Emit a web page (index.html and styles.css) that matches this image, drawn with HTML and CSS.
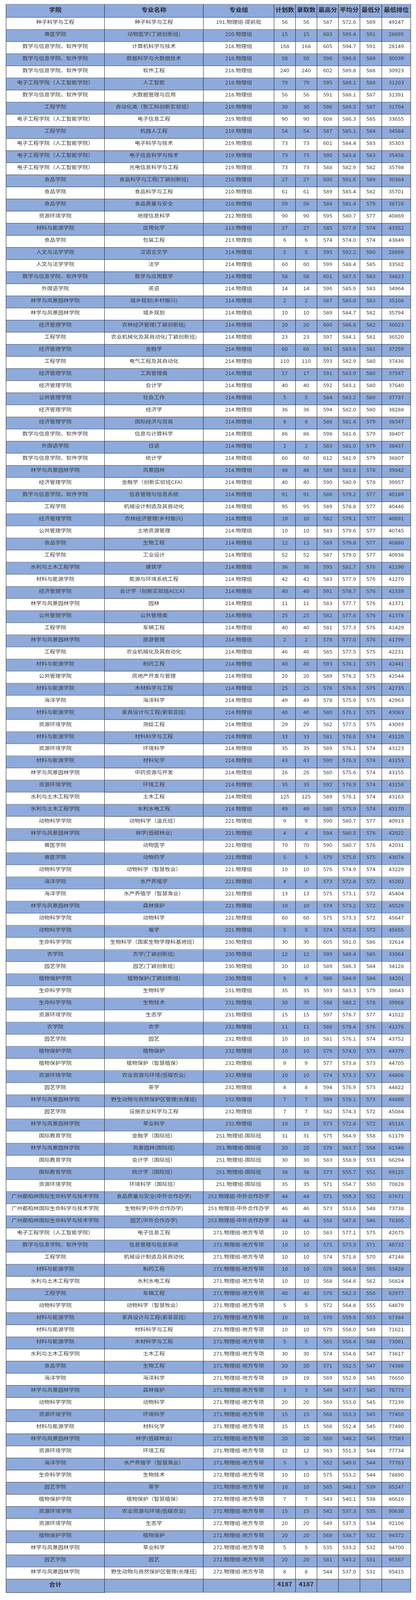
FILE: index.html
```html
<!DOCTYPE html>
<html lang="zh-CN">
<head>
<meta charset="utf-8">
<title>录取分数统计</title>
<link rel="stylesheet" href="styles.css">
</head>
<body>
<div class="page">
<div class="sheet">
<div class="score-table">
<div class="row head"><span>学院</span><span>专业名称</span><span>专业组</span><span>计划数</span><span>录取数</span><span>最高分</span><span>平均分</span><span>最低分</span><span>最低排位</span></div>
<div class="row"><span>种子科学与工程</span><span>种子科学与工程</span><span>191.物理组-提前批</span><span>56</span><span>56</span><span>587</span><span>572.6</span><span>569</span><span>49247</span></div>
<div class="row"><span>兽医学院</span><span>动物医学(丁颖创新班)</span><span>220.物理组</span><span>15</span><span>15</span><span>603</span><span>595.4</span><span>591</span><span>28695</span></div>
<div class="row"><span>数学与信息学院、软件学院</span><span>计算机科学与技术</span><span>218.物理组</span><span>168</span><span>168</span><span>605</span><span>594.7</span><span>591</span><span>28149</span></div>
<div class="row"><span>数学与信息学院、软件学院</span><span>数据科学与大数据技术</span><span>218.物理组</span><span>50</span><span>50</span><span>596</span><span>590.6</span><span>589</span><span>30039</span></div>
<div class="row"><span>数学与信息学院、软件学院</span><span>软件工程</span><span>218.物理组</span><span>240</span><span>240</span><span>602</span><span>589.8</span><span>588</span><span>30923</span></div>
<div class="row"><span>电子工程学院（人工智能学院）</span><span>人工智能</span><span>218.物理组</span><span>79</span><span>79</span><span>595</span><span>589.1</span><span>588</span><span>31203</span></div>
<div class="row"><span>数学与信息学院、软件学院</span><span>大数据管理与应用</span><span>218.物理组</span><span>56</span><span>56</span><span>591</span><span>588.1</span><span>587</span><span>31391</span></div>
<div class="row"><span>工程学院</span><span>自动化类（新工科创新实验班）</span><span>219.物理组</span><span>30</span><span>30</span><span>596</span><span>589.5</span><span>587</span><span>31704</span></div>
<div class="row"><span>电子工程学院（人工智能学院）</span><span>电子信息工程</span><span>219.物理组</span><span>90</span><span>90</span><span>608</span><span>586.3</span><span>585</span><span>33655</span></div>
<div class="row"><span>工程学院</span><span>机器人工程</span><span>219.物理组</span><span>54</span><span>54</span><span>587</span><span>585.1</span><span>584</span><span>34584</span></div>
<div class="row"><span>电子工程学院（人工智能学院）</span><span>电子科学与技术</span><span>219.物理组</span><span>73</span><span>73</span><span>601</span><span>584.4</span><span>583</span><span>35303</span></div>
<div class="row"><span>电子工程学院（人工智能学院）</span><span>电子信息科学与技术</span><span>219.物理组</span><span>73</span><span>73</span><span>590</span><span>583.8</span><span>583</span><span>35458</span></div>
<div class="row"><span>电子工程学院（人工智能学院）</span><span>光电信息科学与工程</span><span>219.物理组</span><span>73</span><span>73</span><span>588</span><span>582.9</span><span>582</span><span>35798</span></div>
<div class="row"><span>食品学院</span><span>食品科学与工程(丁颖创新班)</span><span>210.物理组</span><span>27</span><span>27</span><span>600</span><span>591.6</span><span>589</span><span>30384</span></div>
<div class="row"><span>食品学院</span><span>食品科学与工程</span><span>210.物理组</span><span>61</span><span>61</span><span>589</span><span>585.4</span><span>582</span><span>35701</span></div>
<div class="row"><span>食品学院</span><span>食品质量与安全</span><span>210.物理组</span><span>59</span><span>59</span><span>588</span><span>581.4</span><span>579</span><span>38728</span></div>
<div class="row"><span>资源环境学院</span><span>地理信息科学</span><span>212.物理组</span><span>90</span><span>90</span><span>595</span><span>580.7</span><span>577</span><span>40869</span></div>
<div class="row"><span>材料与能源学院</span><span>应用化学</span><span>213.物理组</span><span>27</span><span>27</span><span>585</span><span>577.9</span><span>574</span><span>43352</span></div>
<div class="row"><span>食品学院</span><span>包装工程</span><span>213.物理组</span><span>6</span><span>6</span><span>574</span><span>574.0</span><span>574</span><span>43849</span></div>
<div class="row"><span>人文与法学学院</span><span>汉语言文学</span><span>214.物理组</span><span>5</span><span>5</span><span>595</span><span>592.2</span><span>590</span><span>28869</span></div>
<div class="row"><span>人文与法学学院</span><span>法学</span><span>214.物理组</span><span>60</span><span>60</span><span>599</span><span>588.4</span><span>585</span><span>33582</span></div>
<div class="row"><span>数学与信息学院、软件学院</span><span>数学与应用数学</span><span>214.物理组</span><span>58</span><span>58</span><span>601</span><span>587.5</span><span>583</span><span>34823</span></div>
<div class="row"><span>外国语学院</span><span>英语</span><span>214.物理组</span><span>14</span><span>14</span><span>596</span><span>585.9</span><span>583</span><span>34964</span></div>
<div class="row"><span>林学与风景园林学院</span><span>城乡规划(乡村振兴)</span><span>214.物理组</span><span>2</span><span>2</span><span>587</span><span>585.0</span><span>583</span><span>35108</span></div>
<div class="row"><span>林学与风景园林学院</span><span>城乡规划</span><span>214.物理组</span><span>10</span><span>10</span><span>589</span><span>584.7</span><span>582</span><span>35794</span></div>
<div class="row"><span>经济管理学院</span><span>农林经济管理(丁颖创新班)</span><span>214.物理组</span><span>20</span><span>20</span><span>600</span><span>586.8</span><span>582</span><span>36023</span></div>
<div class="row"><span>工程学院</span><span>农业机械化及其自动化(丁颖创新班)</span><span>214.物理组</span><span>23</span><span>23</span><span>597</span><span>584.1</span><span>581</span><span>36520</span></div>
<div class="row"><span>经济管理学院</span><span>金融学</span><span>214.物理组</span><span>60</span><span>60</span><span>591</span><span>583.6</span><span>581</span><span>37259</span></div>
<div class="row"><span>工程学院</span><span>电气工程及其自动化</span><span>214.物理组</span><span>110</span><span>110</span><span>593</span><span>582.9</span><span>580</span><span>37436</span></div>
<div class="row"><span>经济管理学院</span><span>工商管理类</span><span>214.物理组</span><span>17</span><span>17</span><span>591</span><span>583.9</span><span>580</span><span>37547</span></div>
<div class="row"><span>经济管理学院</span><span>会计学</span><span>214.物理组</span><span>40</span><span>40</span><span>592</span><span>583.1</span><span>580</span><span>37640</span></div>
<div class="row"><span>公共管理学院</span><span>社会工作</span><span>214.物理组</span><span>5</span><span>5</span><span>584</span><span>583.2</span><span>580</span><span>37737</span></div>
<div class="row"><span>经济管理学院</span><span>经济学</span><span>214.物理组</span><span>36</span><span>36</span><span>594</span><span>582.0</span><span>580</span><span>38288</span></div>
<div class="row"><span>经济管理学院</span><span>国际经济与贸易</span><span>214.物理组</span><span>8</span><span>8</span><span>588</span><span>581.4</span><span>579</span><span>38347</span></div>
<div class="row"><span>数学与信息学院、软件学院</span><span>信息与计算科学</span><span>214.物理组</span><span>86</span><span>86</span><span>598</span><span>581.6</span><span>579</span><span>38407</span></div>
<div class="row"><span>外国语学院</span><span>日语</span><span>214.物理组</span><span>2</span><span>2</span><span>583</span><span>581.0</span><span>579</span><span>38437</span></div>
<div class="row"><span>数学与信息学院、软件学院</span><span>统计学</span><span>214.物理组</span><span>60</span><span>60</span><span>612</span><span>581.9</span><span>579</span><span>38807</span></div>
<div class="row"><span>林学与风景园林学院</span><span>风景园林</span><span>214.物理组</span><span>48</span><span>48</span><span>589</span><span>581.6</span><span>578</span><span>39842</span></div>
<div class="row"><span>经济管理学院</span><span>金融学（创新实验班CFA）</span><span>214.物理组</span><span>40</span><span>40</span><span>590</span><span>580.9</span><span>578</span><span>39957</span></div>
<div class="row"><span>数学与信息学院、软件学院</span><span>信息管理与信息系统</span><span>214.物理组</span><span>91</span><span>91</span><span>586</span><span>579.2</span><span>577</span><span>40189</span></div>
<div class="row"><span>工程学院</span><span>机械设计制造及其自动化</span><span>214.物理组</span><span>95</span><span>95</span><span>589</span><span>578.8</span><span>577</span><span>40446</span></div>
<div class="row"><span>经济管理学院</span><span>农林经济管理(乡村振兴)</span><span>214.物理组</span><span>10</span><span>10</span><span>582</span><span>579.1</span><span>577</span><span>40691</span></div>
<div class="row"><span>公共管理学院</span><span>土地资源管理</span><span>214.物理组</span><span>10</span><span>10</span><span>583</span><span>579.6</span><span>577</span><span>40745</span></div>
<div class="row"><span>食品学院</span><span>生物工程</span><span>214.物理组</span><span>12</span><span>12</span><span>589</span><span>579.8</span><span>577</span><span>40880</span></div>
<div class="row"><span>工程学院</span><span>工业设计</span><span>214.物理组</span><span>52</span><span>52</span><span>587</span><span>579.0</span><span>577</span><span>40938</span></div>
<div class="row"><span>水利与土木工程学院</span><span>建筑学</span><span>214.物理组</span><span>36</span><span>36</span><span>595</span><span>581.7</span><span>576</span><span>41190</span></div>
<div class="row"><span>材料与能源学院</span><span>能源与环境系统工程</span><span>214.物理组</span><span>42</span><span>42</span><span>583</span><span>577.9</span><span>576</span><span>41270</span></div>
<div class="row"><span>经济管理学院</span><span>会计学（创新实验班ACCA）</span><span>214.物理组</span><span>40</span><span>40</span><span>591</span><span>578.7</span><span>576</span><span>41339</span></div>
<div class="row"><span>林学与风景园林学院</span><span>园林</span><span>214.物理组</span><span>11</span><span>11</span><span>583</span><span>577.7</span><span>576</span><span>41371</span></div>
<div class="row"><span>公共管理学院</span><span>公共管理类</span><span>214.物理组</span><span>25</span><span>25</span><span>582</span><span>577.6</span><span>576</span><span>41378</span></div>
<div class="row"><span>工程学院</span><span>车辆工程</span><span>214.物理组</span><span>40</span><span>40</span><span>581</span><span>577.3</span><span>576</span><span>41429</span></div>
<div class="row"><span>林学与风景园林学院</span><span>旅游管理</span><span>214.物理组</span><span>2</span><span>2</span><span>578</span><span>577.0</span><span>576</span><span>41799</span></div>
<div class="row"><span>工程学院</span><span>农业机械化及其自动化</span><span>214.物理组</span><span>46</span><span>46</span><span>585</span><span>577.5</span><span>575</span><span>42231</span></div>
<div class="row"><span>材料与能源学院</span><span>制药工程</span><span>214.物理组</span><span>40</span><span>40</span><span>593</span><span>578.1</span><span>575</span><span>42441</span></div>
<div class="row"><span>公共管理学院</span><span>房地产开发与管理</span><span>214.物理组</span><span>20</span><span>20</span><span>589</span><span>578.2</span><span>575</span><span>42544</span></div>
<div class="row"><span>材料与能源学院</span><span>木材科学与工程</span><span>214.物理组</span><span>25</span><span>25</span><span>578</span><span>576.6</span><span>575</span><span>42735</span></div>
<div class="row"><span>海洋学院</span><span>海洋科学</span><span>214.物理组</span><span>49</span><span>49</span><span>578</span><span>575.9</span><span>575</span><span>42963</span></div>
<div class="row"><span>材料与能源学院</span><span>家具设计与工程(索菲亚班)</span><span>214.物理组</span><span>40</span><span>40</span><span>580</span><span>576.1</span><span>575</span><span>43083</span></div>
<div class="row"><span>资源环境学院</span><span>测绘工程</span><span>214.物理组</span><span>29</span><span>29</span><span>582</span><span>577.5</span><span>575</span><span>43093</span></div>
<div class="row"><span>材料与能源学院</span><span>材料科学与工程</span><span>214.物理组</span><span>33</span><span>33</span><span>581</span><span>576.6</span><span>574</span><span>43120</span></div>
<div class="row"><span>资源环境学院</span><span>环境科学</span><span>214.物理组</span><span>35</span><span>35</span><span>589</span><span>576.1</span><span>574</span><span>43123</span></div>
<div class="row"><span>材料与能源学院</span><span>材料化学</span><span>214.物理组</span><span>43</span><span>43</span><span>590</span><span>576.3</span><span>574</span><span>43153</span></div>
<div class="row"><span>林学与风景园林学院</span><span>中药资源与开发</span><span>214.物理组</span><span>26</span><span>26</span><span>580</span><span>575.6</span><span>574</span><span>43155</span></div>
<div class="row"><span>资源环境学院</span><span>环境工程</span><span>214.物理组</span><span>35</span><span>35</span><span>592</span><span>576.9</span><span>574</span><span>43156</span></div>
<div class="row"><span>水利与土木工程学院</span><span>土木工程</span><span>214.物理组</span><span>125</span><span>125</span><span>589</span><span>576.1</span><span>574</span><span>43163</span></div>
<div class="row"><span>水利与土木工程学院</span><span>水利水电工程</span><span>214.物理组</span><span>49</span><span>49</span><span>580</span><span>575.9</span><span>574</span><span>43170</span></div>
<div class="row"><span>动物科学学院</span><span>动物科学（温氏班）</span><span>221.物理组</span><span>9</span><span>9</span><span>590</span><span>580.7</span><span>577</span><span>40913</span></div>
<div class="row"><span>林学与风景园林学院</span><span>林学(低碳林业)</span><span>221.物理组</span><span>4</span><span>4</span><span>594</span><span>580.5</span><span>576</span><span>42022</span></div>
<div class="row"><span>兽医学院</span><span>动物医学</span><span>221.物理组</span><span>70</span><span>70</span><span>590</span><span>580.7</span><span>576</span><span>42031</span></div>
<div class="row"><span>兽医学院</span><span>动物药学</span><span>221.物理组</span><span>5</span><span>5</span><span>575</span><span>575.0</span><span>575</span><span>43074</span></div>
<div class="row"><span>动物科学学院</span><span>动物科学（智慧牧业）</span><span>221.物理组</span><span>10</span><span>10</span><span>576</span><span>574.9</span><span>574</span><span>43229</span></div>
<div class="row"><span>海洋学院</span><span>水产养殖学</span><span>221.物理组</span><span>4</span><span>4</span><span>573</span><span>572.8</span><span>572</span><span>45202</span></div>
<div class="row"><span>海洋学院</span><span>水产养殖学（智慧渔业）</span><span>221.物理组</span><span>13</span><span>13</span><span>575</span><span>573.1</span><span>572</span><span>45404</span></div>
<div class="row"><span>林学与风景园林学院</span><span>森林保护</span><span>221.物理组</span><span>10</span><span>10</span><span>574</span><span>573.2</span><span>572</span><span>45529</span></div>
<div class="row"><span>动物科学学院</span><span>动物科学</span><span>221.物理组</span><span>60</span><span>60</span><span>575</span><span>573.3</span><span>572</span><span>45647</span></div>
<div class="row"><span>动物科学学院</span><span>蚕学</span><span>221.物理组</span><span>5</span><span>5</span><span>574</span><span>572.6</span><span>572</span><span>45655</span></div>
<div class="row"><span>生命科学学院</span><span>生物科学（国家生物学理科基地班）</span><span>230.物理组</span><span>30</span><span>30</span><span>605</span><span>591.0</span><span>586</span><span>32614</span></div>
<div class="row"><span>农学院</span><span>农学(丁颖创新班)</span><span>230.物理组</span><span>12</span><span>12</span><span>599</span><span>589.4</span><span>585</span><span>33064</span></div>
<div class="row"><span>园艺学院</span><span>园艺(丁颖创新班)</span><span>230.物理组</span><span>10</span><span>10</span><span>589</span><span>586.3</span><span>584</span><span>34128</span></div>
<div class="row"><span>植物保护学院</span><span>植物保护(丁颖创新班)</span><span>230.物理组</span><span>9</span><span>9</span><span>586</span><span>584.9</span><span>584</span><span>34201</span></div>
<div class="row"><span>生命科学学院</span><span>生物科学</span><span>231.物理组</span><span>35</span><span>35</span><span>593</span><span>583.3</span><span>579</span><span>38643</span></div>
<div class="row"><span>生命科学学院</span><span>生物技术</span><span>231.物理组</span><span>30</span><span>30</span><span>588</span><span>580.2</span><span>578</span><span>39968</span></div>
<div class="row"><span>资源环境学院</span><span>生态学</span><span>231.物理组</span><span>15</span><span>15</span><span>597</span><span>578.7</span><span>577</span><span>41012</span></div>
<div class="row"><span>农学院</span><span>农学</span><span>232.物理组</span><span>11</span><span>11</span><span>586</span><span>579.4</span><span>576</span><span>41276</span></div>
<div class="row"><span>园艺学院</span><span>园艺</span><span>232.物理组</span><span>10</span><span>10</span><span>581</span><span>576.1</span><span>574</span><span>43752</span></div>
<div class="row"><span>植物保护学院</span><span>植物保护</span><span>232.物理组</span><span>10</span><span>10</span><span>579</span><span>574.0</span><span>573</span><span>44379</span></div>
<div class="row"><span>植物保护学院</span><span>植物保护（智慧植保）</span><span>232.物理组</span><span>9</span><span>9</span><span>577</span><span>573.8</span><span>573</span><span>44705</span></div>
<div class="row"><span>资源环境学院</span><span>农业资源与环境(低碳农业)</span><span>232.物理组</span><span>10</span><span>10</span><span>574</span><span>573.3</span><span>573</span><span>44806</span></div>
<div class="row"><span>园艺学院</span><span>茶学</span><span>232.物理组</span><span>8</span><span>8</span><span>594</span><span>576.9</span><span>573</span><span>44822</span></div>
<div class="row"><span>林学与风景园林学院</span><span>野生动物与自然保护区管理(长隆班)</span><span>232.物理组</span><span>7</span><span>7</span><span>594</span><span>578.1</span><span>573</span><span>44880</span></div>
<div class="row"><span>园艺学院</span><span>设施农业科学与工程</span><span>232.物理组</span><span>7</span><span>7</span><span>582</span><span>574.3</span><span>572</span><span>45084</span></div>
<div class="row"><span>林学与风景园林学院</span><span>草业科学</span><span>232.物理组</span><span>10</span><span>10</span><span>573</span><span>572.8</span><span>572</span><span>45116</span></div>
<div class="row"><span>国际教育学院</span><span>金融学（国际班）</span><span>251.物理组-国际班</span><span>31</span><span>31</span><span>575</span><span>564.9</span><span>558</span><span>61179</span></div>
<div class="row"><span>林学与风景园林学院</span><span>风景园林(国际班)</span><span>251.物理组-国际班</span><span>20</span><span>20</span><span>578</span><span>563.7</span><span>558</span><span>61349</span></div>
<div class="row"><span>国际教育学院</span><span>会计学（国际班）</span><span>251.物理组-国际班</span><span>30</span><span>30</span><span>583</span><span>558.9</span><span>553</span><span>66294</span></div>
<div class="row"><span>国际教育学院</span><span>统计学（国际班）</span><span>251.物理组-国际班</span><span>38</span><span>38</span><span>573</span><span>555.7</span><span>551</span><span>69125</span></div>
<div class="row"><span>资源环境学院</span><span>环境科学（国际班）</span><span>251.物理组-国际班</span><span>35</span><span>35</span><span>571</span><span>554.7</span><span>550</span><span>70828</span></div>
<div class="row"><span>广州都柏林国际生命科学与技术学院</span><span>食品质量与安全(中外合作办学)</span><span>252.物理组-中外合作办学</span><span>44</span><span>44</span><span>571</span><span>559.3</span><span>552</span><span>67671</span></div>
<div class="row"><span>广州都柏林国际生命科学与技术学院</span><span>生物科学(中外合作办学)</span><span>253.物理组-中外合作办学</span><span>46</span><span>46</span><span>573</span><span>553.6</span><span>548</span><span>73738</span></div>
<div class="row"><span>广州都柏林国际生命科学与技术学院</span><span>园艺(中外合作办学)</span><span>253.物理组-中外合作办学</span><span>44</span><span>44</span><span>558</span><span>547.6</span><span>546</span><span>76305</span></div>
<div class="row"><span>电子工程学院（人工智能学院）</span><span>电子信息工程</span><span>271.物理组-地方专项</span><span>10</span><span>10</span><span>583</span><span>577.1</span><span>575</span><span>42675</span></div>
<div class="row"><span>数学与信息学院、软件学院</span><span>信息管理与信息系统</span><span>271.物理组-地方专项</span><span>10</span><span>10</span><span>575</span><span>573.3</span><span>571</span><span>46732</span></div>
<div class="row"><span>工程学院</span><span>机械设计制造及其自动化</span><span>271.物理组-地方专项</span><span>10</span><span>10</span><span>574</span><span>571.8</span><span>570</span><span>47148</span></div>
<div class="row"><span>材料与能源学院</span><span>制药工程</span><span>271.物理组-地方专项</span><span>10</span><span>10</span><span>570</span><span>566.9</span><span>565</span><span>53428</span></div>
<div class="row"><span>水利与土木工程学院</span><span>水利水电工程</span><span>271.物理组-地方专项</span><span>10</span><span>10</span><span>568</span><span>564.6</span><span>562</span><span>56824</span></div>
<div class="row"><span>工程学院</span><span>车辆工程</span><span>271.物理组-地方专项</span><span>40</span><span>40</span><span>570</span><span>562.3</span><span>556</span><span>62977</span></div>
<div class="row"><span>动物科学学院</span><span>动物科学（智慧牧业）</span><span>271.物理组-地方专项</span><span>5</span><span>5</span><span>572</span><span>564.8</span><span>555</span><span>64879</span></div>
<div class="row"><span>材料与能源学院</span><span>家具设计与工程(索菲亚班)</span><span>271.物理组-地方专项</span><span>10</span><span>10</span><span>570</span><span>559.6</span><span>553</span><span>67384</span></div>
<div class="row"><span>材料与能源学院</span><span>材料科学与工程</span><span>271.物理组-地方专项</span><span>10</span><span>10</span><span>570</span><span>558.0</span><span>549</span><span>71621</span></div>
<div class="row"><span>材料与能源学院</span><span>木材科学与工程</span><span>271.物理组-地方专项</span><span>5</span><span>5</span><span>565</span><span>558.4</span><span>548</span><span>73091</span></div>
<div class="row"><span>水利与土木工程学院</span><span>土木工程</span><span>271.物理组-地方专项</span><span>30</span><span>30</span><span>574</span><span>554.6</span><span>547</span><span>73817</span></div>
<div class="row"><span>食品学院</span><span>生物工程</span><span>271.物理组-地方专项</span><span>20</span><span>20</span><span>571</span><span>552.5</span><span>547</span><span>74386</span></div>
<div class="row"><span>海洋学院</span><span>海洋科学</span><span>271.物理组-地方专项</span><span>19</span><span>19</span><span>569</span><span>552.9</span><span>545</span><span>76650</span></div>
<div class="row"><span>林学与风景园林学院</span><span>森林保护</span><span>271.物理组-地方专项</span><span>3</span><span>3</span><span>549</span><span>547.7</span><span>545</span><span>76773</span></div>
<div class="row"><span>动物科学学院</span><span>动物科学</span><span>271.物理组-地方专项</span><span>20</span><span>20</span><span>569</span><span>553.0</span><span>545</span><span>77239</span></div>
<div class="row"><span>资源环境学院</span><span>环境科学</span><span>271.物理组-地方专项</span><span>15</span><span>15</span><span>568</span><span>553.3</span><span>545</span><span>77450</span></div>
<div class="row"><span>材料与能源学院</span><span>材料化学</span><span>271.物理组-地方专项</span><span>15</span><span>15</span><span>566</span><span>552.4</span><span>545</span><span>77490</span></div>
<div class="row"><span>林学与风景园林学院</span><span>林学(低碳林业)</span><span>271.物理组-地方专项</span><span>20</span><span>20</span><span>560</span><span>548.2</span><span>545</span><span>77583</span></div>
<div class="row"><span>资源环境学院</span><span>环境工程</span><span>271.物理组-地方专项</span><span>12</span><span>12</span><span>563</span><span>551.3</span><span>544</span><span>77734</span></div>
<div class="row"><span>海洋学院</span><span>水产养殖学（智慧渔业）</span><span>271.物理组-地方专项</span><span>5</span><span>5</span><span>552</span><span>549.0</span><span>544</span><span>77763</span></div>
<div class="row"><span>生命科学学院</span><span>生物技术</span><span>272.物理组-地方专项</span><span>10</span><span>10</span><span>575</span><span>553.2</span><span>544</span><span>78890</span></div>
<div class="row"><span>园艺学院</span><span>茶学</span><span>272.物理组-地方专项</span><span>10</span><span>10</span><span>565</span><span>548.1</span><span>539</span><span>85247</span></div>
<div class="row"><span>植物保护学院</span><span>植物保护（智慧植保）</span><span>272.物理组-地方专项</span><span>7</span><span>7</span><span>543</span><span>540.1</span><span>538</span><span>86616</span></div>
<div class="row"><span>资源环境学院</span><span>农业资源与环境(低碳农业)</span><span>272.物理组-地方专项</span><span>15</span><span>15</span><span>542</span><span>537.3</span><span>535</span><span>90630</span></div>
<div class="row"><span>资源环境学院</span><span>生态学</span><span>272.物理组-地方专项</span><span>20</span><span>20</span><span>549</span><span>537.5</span><span>534</span><span>92106</span></div>
<div class="row"><span>植物保护学院</span><span>植物保护</span><span>272.物理组-地方专项</span><span>20</span><span>20</span><span>569</span><span>538.7</span><span>532</span><span>94372</span></div>
<div class="row"><span>林学与风景园林学院</span><span>草业科学</span><span>272.物理组-地方专项</span><span>5</span><span>5</span><span>535</span><span>533.2</span><span>532</span><span>94700</span></div>
<div class="row"><span>园艺学院</span><span>园艺</span><span>272.物理组-地方专项</span><span>20</span><span>20</span><span>581</span><span>543.2</span><span>531</span><span>95367</span></div>
<div class="row"><span>林学与风景园林学院</span><span>野生动物与自然保护区管理(长隆班)</span><span>272.物理组-地方专项</span><span>8</span><span>8</span><span>544</span><span>537.0</span><span>531</span><span>95415</span></div>
<div class="row total"><span>合计</span><span></span><span></span><span>4187</span><span>4187</span><span></span><span></span><span></span><span></span></div>
</div>
</div>
</div>
</body>
</html>
```

FILE: styles.css
```css
html, body {
  margin: 0;
  padding: 0;
  background: #ffffff;
}

body {
  font-family: "Noto Sans CJK SC", "Noto Sans", "DejaVu Sans", sans-serif;
  color: #3a3a3a;
}

/* the capture frame is 4096px tall: the 4626px sheet is fitted into it */
.page {
  height: 4096px;
  overflow: hidden;
}

.sheet {
  box-sizing: border-box;
  height: 4626px;
  padding: 12px 0 0 15px;
  transform: scaleY(0.88543);
  transform-origin: 0 0;
}

.score-table {
  display: grid;
  grid-template-columns: 252px 253px 181px 55px 55px 55px 55px 56px 74px;
  grid-template-rows: 38px repeat(129, 35px) 39px;
  width: 1037px;
  border-top: 1px solid #1c1c24;
  border-left: 1px solid #1c1c24;
}

.row {
  display: contents;
}

.row > span {
  display: block;
  box-sizing: border-box;
  border-right: 1px solid #1c1c24;
  border-bottom: 1px solid #1c1c24;
  text-align: center;
  white-space: nowrap;
  overflow: hidden;
  font-size: 14px;
  line-height: 20px;
  padding-top: 2px;
  background: #ffffff;
}

.row:nth-child(odd) > span {
  background: #8eaadb;
}

.row.head > span,
.row.total > span {
  background: #8eaadb;
  font-size: 16px;
  font-weight: 700;
  color: #2a2a2a;
  line-height: 22px;
  padding-top: 3px;
}
```
